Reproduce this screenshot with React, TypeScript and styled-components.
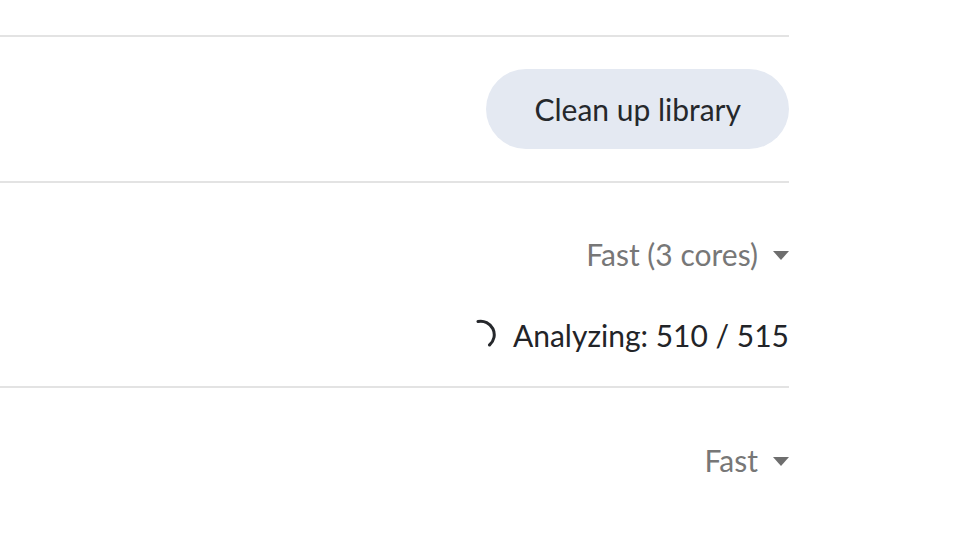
import styled, { createGlobalStyle } from 'styled-components'

const GlobalStyle = createGlobalStyle`
  body {
    margin: 0;
    background: #ffffff;
    font-family: Lato, 'Noto Sans', sans-serif;
  }
`

const Page = styled.div`
  width: 789px;
`

const Section = styled.div<{ $height: number }>`
  box-sizing: border-box;
  height: ${(p) => p.$height}px;
  border-bottom: 2px solid #e3e3e3;
`

const Row = styled.div`
  box-sizing: border-box;
  display: flex;
  flex-direction: column;
  align-items: flex-end;
  border-bottom: 2px solid #e3e3e3;
`

const ButtonRow = styled(Row)`
  padding: 32px 0;
`

const SettingsRow = styled(Row)`
  padding: 51px 0 31px;
  gap: 41px;
`

const LastRow = styled(Row)`
  padding-top: 52px;
  border-bottom: none;
`

const PillButton = styled.button`
  height: 80px;
  padding: 0 48px;
  border: none;
  border-radius: 40px;
  background: #e4e9f2;
  color: #25282c;
  font-family: Lato, 'Noto Sans', sans-serif;
  font-size: 30px;
  cursor: pointer;
`

const Select = styled.div`
  display: flex;
  align-items: center;
  gap: 15px;
  height: 40px;
  color: #777777;
  font-size: 30px;
`

const Caret = styled.span`
  width: 0;
  height: 0;
  border-left: 8px solid transparent;
  border-right: 8px solid transparent;
  border-top: 9px solid #6e6e6e;
  margin-top: 3px;
`

const Status = styled.div`
  display: flex;
  align-items: center;
  gap: 14px;
  height: 40px;
  color: #222428;
  font-size: 30px;
`

const Spinner = styled.svg`
  width: 32px;
  height: 32px;
`

const Dropdown = ({ label }: { label: string }) => (
  <Select>
    <span>{label}</span>
    <Caret />
  </Select>
)

export default function App() {
  return (
    <Page>
      <GlobalStyle />
      <Section $height={37} />
      <ButtonRow>
        <PillButton>Clean up library</PillButton>
      </ButtonRow>
      <SettingsRow>
        <Dropdown label="Fast (3 cores)" />
        <Status>
          <Spinner viewBox="0 0 32 32">
            <path
              d="M11 2.5 A13.5 13.5 0 0 1 22.5 26"
              fill="none"
              stroke="#26282c"
              strokeWidth="3"
              strokeLinecap="round"
            />
          </Spinner>
          <span>Analyzing: 510 / 515</span>
        </Status>
      </SettingsRow>
      <LastRow>
        <Dropdown label="Fast" />
      </LastRow>
    </Page>
  )
}
